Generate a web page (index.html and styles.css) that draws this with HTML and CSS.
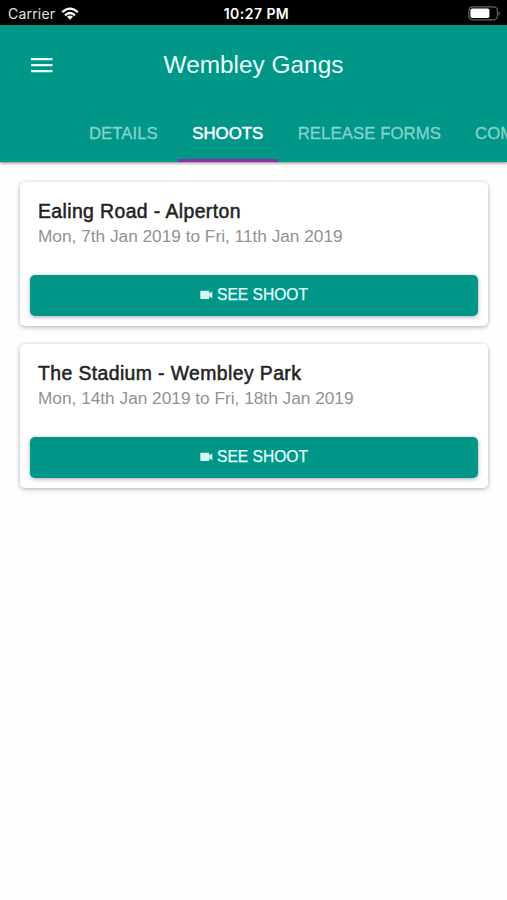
FILE: index.html
```html
<!DOCTYPE html>
<html lang="en">
<head>
<meta charset="utf-8">
<title>Wembley Gangs</title>
<link rel="stylesheet" href="styles.css">
</head>
<body>
<div class="status">
  <div class="carrier"><span>Carrier</span>
    <svg class="wifi" width="18" height="14" viewBox="0 0 18 14" fill="none" stroke="#fff" stroke-width="2.3"><path d="M1.2 5.2Q9-1.9 16.8 5.2M4 8.3Q9 3.8 14 8.3"/><path d="M9 12.7 6 9.7Q9 7.4 12 9.7Z" fill="#fff" stroke="none"/></svg>
  </div>
  <time class="clock">10:27 PM</time>
  <svg class="battery" width="33" height="15" viewBox="0 0 33 15"><rect x=".8" y=".8" width="28.6" height="13" rx="3.8" fill="none" stroke="#666" stroke-width="1.2"/><rect x="2.4" y="2.5" width="19" height="9.6" rx="1.8" fill="#fff"/><path d="M30.7 5.2Q33 7.3 30.7 9.4Z" fill="#777"/></svg>
</div>
<header class="header">
  <div class="toolbar">
    <button class="menu" aria-label="Menu"><svg width="22" height="16" viewBox="0 0 22 16" fill="#e6fffb"><path d="M0 1h21.5v2.3H0zM0 7h21.5v2.3H0zM0 13h21.5v2.3H0z"/></svg></button>
    <h1 class="title">Wembley Gangs</h1>
  </div>
  <nav class="tabs">
    <a class="tab">DETAILS</a>
    <a class="tab active">SHOOTS</a>
    <a class="tab release">RELEASE FORMS</a>
    <a class="tab">COMMENTS</a>
  </nav>
</header>
<main class="shoots">
  <section class="card">
    <h2>Ealing Road - Alperton</h2>
    <p>Mon, 7th Jan 2019 to Fri, 11th Jan 2019</p>
    <button class="see"><svg width="13" height="10" viewBox="0 0 13 10"><path d="M1 .8h7.6q.7 0 .7.7v2L12.3 1.2v7.4L9.3 6.3v2q0 .7-.7.7H1q-.7 0-.7-.7V1.5q0-.7.7-.7Z" fill="#d5f5f0"/></svg><span>SEE SHOOT</span></button>
  </section>
  <section class="card">
    <h2>The Stadium - Wembley Park</h2>
    <p>Mon, 14th Jan 2019 to Fri, 18th Jan 2019</p>
    <button class="see"><svg width="13" height="10" viewBox="0 0 13 10"><path d="M1 .8h7.6q.7 0 .7.7v2L12.3 1.2v7.4L9.3 6.3v2q0 .7-.7.7H1q-.7 0-.7-.7V1.5q0-.7.7-.7Z" fill="#d5f5f0"/></svg><span>SEE SHOOT</span></button>
  </section>
</main>
</body>
</html>
```
FILE: styles.css
```css
* { box-sizing: border-box; }
body {
  margin: 0;
  min-height: 900px;
  background: #fefefe;
  font-family: "Liberation Sans", Arial, sans-serif;
  overflow-x: hidden;
}
h1, h2, p { margin: 0; font-weight: 400; white-space: nowrap; }
button { border: 0; padding: 0; font: inherit; background: none; }
svg { display: block; flex: none; }
.status {
  height: 25px;
  display: grid;
  grid-template-columns: 1fr auto 1fr;
  align-items: center;
  padding: 2px 6px 0 8px;
  background: #000;
  color: #fff;
  font-family: Inter, sans-serif;
  font-size: 14px;
}
.carrier { display: flex; align-items: center; gap: 6px; color: #e0e0e0; letter-spacing: .2px; }
.clock { padding-left: 4px; font-weight: 600; font-size: 14px; letter-spacing: .45px; }
.battery { justify-self: end; }
.header {
  height: 137px;
  background: #009688;
  box-shadow: 0 1px 3px rgba(0, 0, 0, .5);
}
.toolbar {
  height: 79px;
  display: grid;
  grid-template-columns: 84px 1fr 84px;
  align-items: center;
}
.menu { justify-self: center; }
.title { text-align: center; font-size: 24.4px; color: #eafffc; }
.tabs { height: 58px; display: flex; padding-left: 71px; overflow: hidden; }
.tab {
  flex: none;
  height: 58px;
  padding: 0 18px;
  line-height: 59px;
  font-size: 16.8px;
  color: #85d3cb;
  -webkit-text-stroke: .3px #85d3cb;
  white-space: nowrap;
}
.tab.active {
  width: 100px;
  margin: 0 2px;
  padding: 0;
  text-align: center;
  color: #fff;
  -webkit-text-stroke: .5px #fff;
  border-bottom: 3px solid #8e2fa8;
}
.tab.release { padding-right: 16px; letter-spacing: .05px; }
.shoots { padding: 19.5px 19px 0 20px; display: grid; gap: 18px; }
.card {
  height: 144px;
  padding: 16px 10px 10px;
  display: flex;
  flex-direction: column;
  background: #fff;
  border-radius: 5px;
  box-shadow: 0 1px 4px rgba(0, 0, 0, .28), 0 2px 8px rgba(0, 0, 0, .05);
}
.card h2 {
  padding-left: 8px;
  font-size: 19.4px;
  line-height: 26px;
  color: #222;
  letter-spacing: .4px;
  -webkit-text-stroke: .5px #222;
}
.card p { padding-left: 8px; font-size: 17.25px; line-height: 25px; color: #929292; }
.see {
  height: 41px;
  margin-top: auto;
  padding-bottom: 1px;
  display: flex;
  align-items: center;
  justify-content: center;
  gap: 4px;
  background: #009688;
  border-radius: 5px;
  box-shadow: 0 1px 4px rgba(0, 0, 0, .35);
  color: #e2fffb;
  font-size: 15.6px;
  -webkit-text-stroke: .25px #e2fffb;
}
```
